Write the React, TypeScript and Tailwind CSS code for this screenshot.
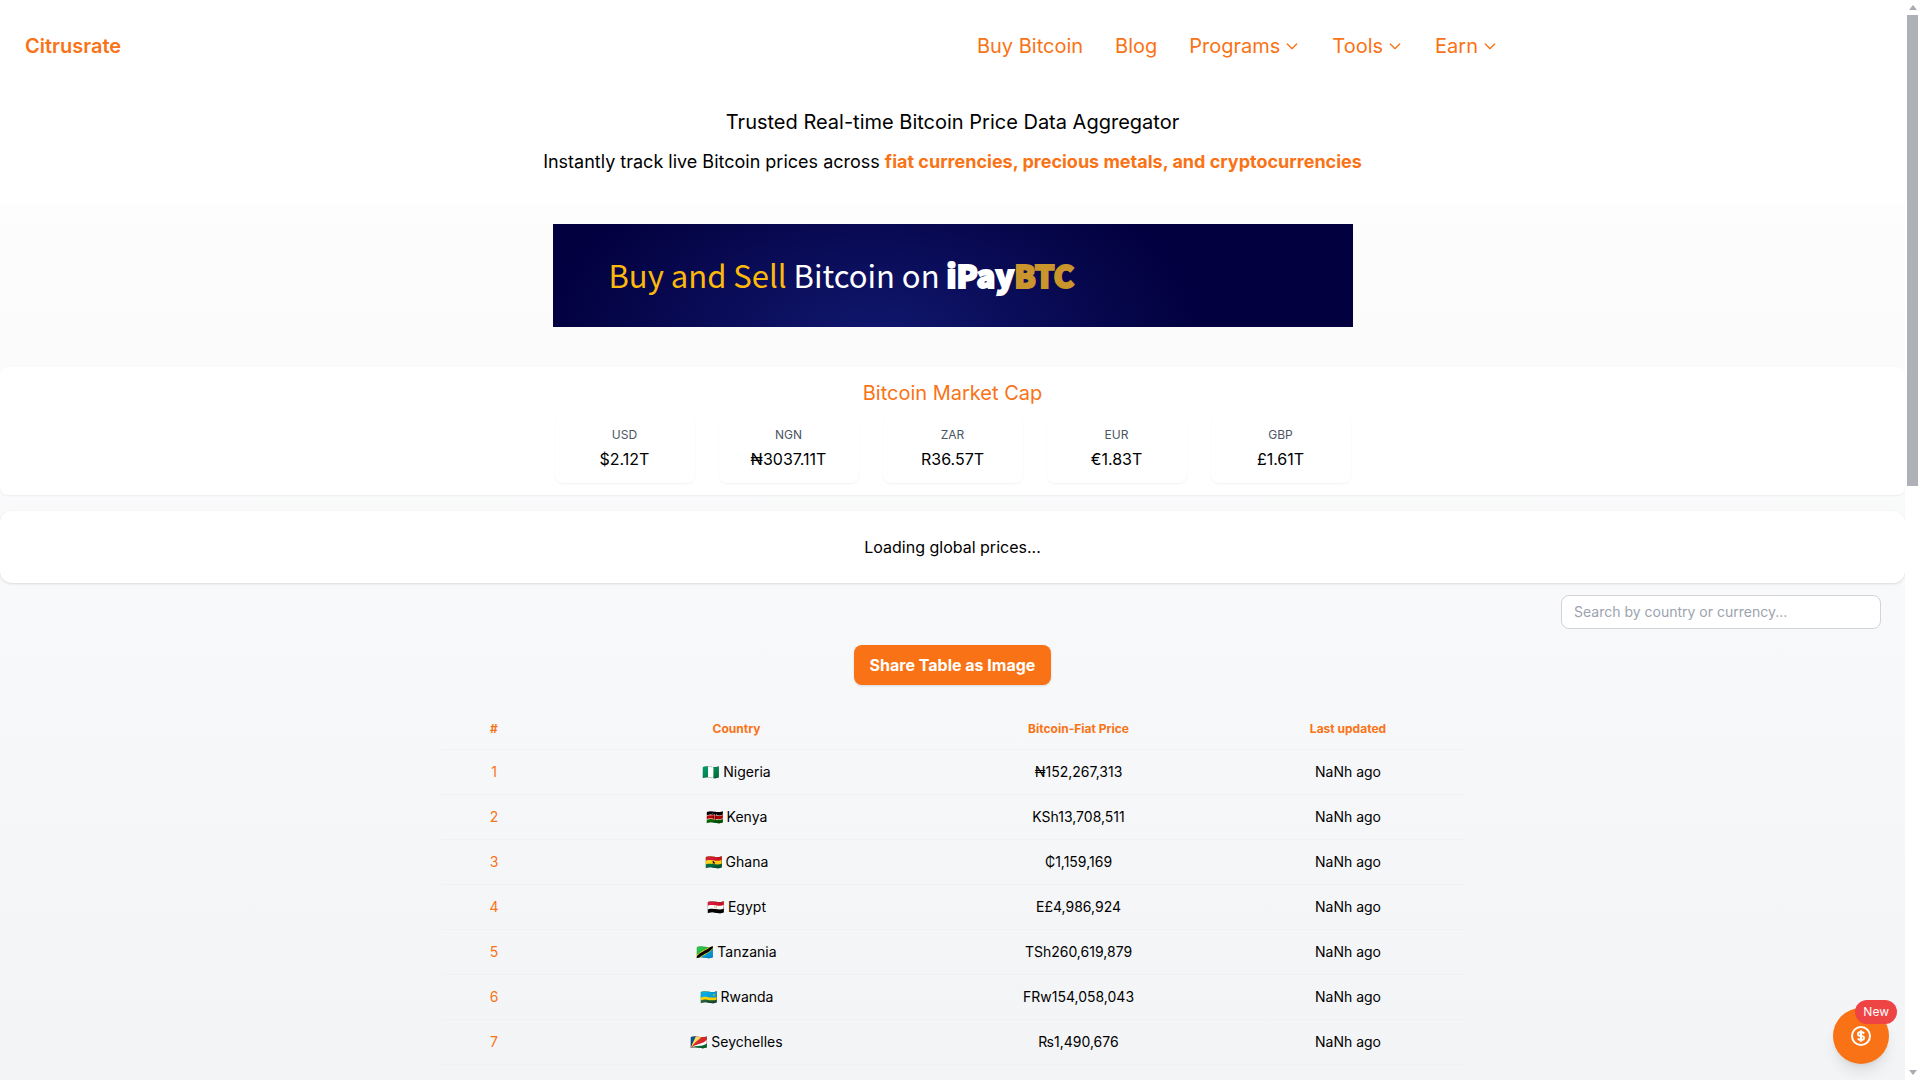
import { HiOutlineCurrencyDollar } from 'react-icons/hi';

const navLinks = [
  { label: 'Buy Bitcoin', menu: false },
  { label: 'Blog', menu: false },
  { label: 'Programs', menu: true },
  { label: 'Tools', menu: true },
  { label: 'Earn', menu: true },
];

const marketCaps = [
  { code: 'USD', value: '$2.12T' },
  { code: 'NGN', value: '₦3037.11T' },
  { code: 'ZAR', value: 'R36.57T' },
  { code: 'EUR', value: '€1.83T' },
  { code: 'GBP', value: '£1.61T' },
];

const rates = [
  { flag: '🇳🇬', country: 'Nigeria', price: '₦152,267,313' },
  { flag: '🇰🇪', country: 'Kenya', price: 'KSh13,708,511' },
  { flag: '🇬🇭', country: 'Ghana', price: '₵1,159,169' },
  { flag: '🇪🇬', country: 'Egypt', price: 'E£4,986,924' },
  { flag: '🇹🇿', country: 'Tanzania', price: 'TSh260,619,879' },
  { flag: '🇷🇼', country: 'Rwanda', price: 'FRw154,058,043' },
  { flag: '🇸🇨', country: 'Seychelles', price: '₨1,490,676' },
];

function Chevron() {
  return (
    <svg className="h-4 w-4" fill="none" stroke="currentColor" strokeWidth={2} viewBox="0 0 24 24">
      <path strokeLinecap="round" strokeLinejoin="round" d="M19 9l-7 7-7-7" />
    </svg>
  );
}

function Header() {
  return (
    <header className="flex items-center justify-between py-8 pl-[25px] pr-[407px] text-xl text-[#f97316]">
      <a href="#" className="font-semibold">
        Citrusrate
      </a>
      <nav className="flex items-center gap-8">
        {navLinks.map(({ label, menu }) =>
          menu ? (
            <button key={label} type="button" className="flex items-center gap-1">
              {label}
              <Chevron />
            </button>
          ) : (
            <a key={label} href="#">
              {label}
            </a>
          ),
        )}
      </nav>
    </header>
  );
}

function Banner() {
  return (
    <a
      href="#"
      className="mx-auto mt-5 flex h-[103px] w-full max-w-[800px] items-center bg-[radial-gradient(ellipse_330px_190px_at_40%_115%,#11186f,#02003f)] pl-14 text-[31px] whitespace-pre text-white font-['Noto_Sans_CJK_SC',sans-serif]"
    >
      <span className="text-[#fdb90b]">Buy and Sell</span>
      <span> Bitcoin on </span>
      <span className="font-black [-webkit-text-stroke:2px_#ffffff]">iPay</span>
      <span className="font-black text-[#c9952c] [-webkit-text-stroke:2px_#c9952c]">BTC</span>
    </a>
  );
}

function MarketCap() {
  return (
    <section className="mt-10 rounded-lg bg-white p-3 text-center shadow-xs">
      <h2 className="mb-2 text-xl text-[#f97316]">Bitcoin Market Cap</h2>
      <div className="flex justify-center gap-6">
        {marketCaps.map(({ code, value }) => (
          <div key={code} className="w-[140px] rounded-lg bg-white p-3 shadow-xs">
            <div className="mb-1 text-xs text-[#4b5563]">{code}</div>
            <div>{value}</div>
          </div>
        ))}
      </div>
    </section>
  );
}

function RatesTable() {
  return (
    <table className="mx-auto mt-6 w-full max-w-5xl table-fixed text-center text-sm">
      <colgroup>
        <col className="w-[107px]" />
        <col className="w-[378px]" />
        <col className="w-[306px]" />
        <col className="w-[233px]" />
      </colgroup>
      <thead>
        <tr className="border-b border-[#f1f1f3] text-xs text-[#f97316]">
          <th className="py-3">#</th>
          <th className="py-3">Country</th>
          <th className="py-3">Bitcoin-Fiat Price</th>
          <th className="py-3">Last updated</th>
        </tr>
      </thead>
      <tbody>
        {rates.map(({ flag, country, price }, i) => (
          <tr key={country} className="border-b border-[#f1f1f3]">
            <td className="py-3 text-[#f97316]">{i + 1}</td>
            <td className="py-3">
              {flag} {country}
            </td>
            <td className="py-3">{price}</td>
            <td className="py-3">NaNh ago</td>
          </tr>
        ))}
      </tbody>
    </table>
  );
}

function EarnButton() {
  return (
    <button
      type="button"
      aria-label="Earn"
      className="absolute right-4 bottom-4 flex h-14 w-14 items-center justify-center rounded-full bg-[#f97316] text-white shadow-lg"
    >
      <HiOutlineCurrencyDollar size={24} />
      <span className="absolute -top-2 -right-2 rounded-full bg-[#ef4444] px-2 py-1 text-xs">New</span>
    </button>
  );
}

function Scrollbar() {
  return (
    <div aria-hidden="true" className="flex w-[15px] flex-col items-center bg-white py-[5px] text-[#a9adb3]">
      <svg className="h-[5px] w-[8px] shrink-0" viewBox="0 0 8 5" fill="currentColor">
        <path d="M0 5L4 0l4 5z" />
      </svg>
      <div className="mt-[5px] h-[44%] w-[11px] bg-[#aeb2b8]" />
      <svg className="mt-auto h-[5px] w-[8px] shrink-0" viewBox="0 0 8 5" fill="currentColor">
        <path d="M0 0l4 5 4-5z" />
      </svg>
    </div>
  );
}

export default function App() {
  return (
    <div className="flex h-screen overflow-hidden font-['Inter',sans-serif] text-black">
      <div className="relative flex-1 overflow-hidden bg-linear-to-b from-white to-[#f3f4f6]">
        <div className="bg-white pb-7">
          <Header />
          <div className="pt-4 text-center">
            <h1 className="text-xl">Trusted Real-time Bitcoin Price Data Aggregator</h1>
            <p className="mt-3 text-lg">
              Instantly track live Bitcoin prices across{' '}
              <span className="font-bold text-[#f97316]">
                fiat currencies, precious metals, and cryptocurrencies
              </span>
            </p>
          </div>
        </div>
        <Banner />
        <MarketCap />
        <section className="mt-4 rounded-xl bg-white p-6 text-center shadow-sm">Loading global prices...</section>
        <div className="mt-3 flex justify-end pr-6">
          <input
            type="text"
            aria-label="Search by country or currency"
            placeholder="Search by country or currency..."
            className="w-80 rounded-lg border border-[#d1d5db] bg-white px-3 py-1.5 text-sm placeholder:text-[#9ca3af]"
          />
        </div>
        <div className="mt-4 flex justify-center">
          <button type="button" className="rounded-lg bg-[#f97316] px-4 py-2 font-bold text-white shadow-sm">
            Share Table as Image
          </button>
        </div>
        <RatesTable />
        <EarnButton />
      </div>
      <Scrollbar />
    </div>
  );
}
